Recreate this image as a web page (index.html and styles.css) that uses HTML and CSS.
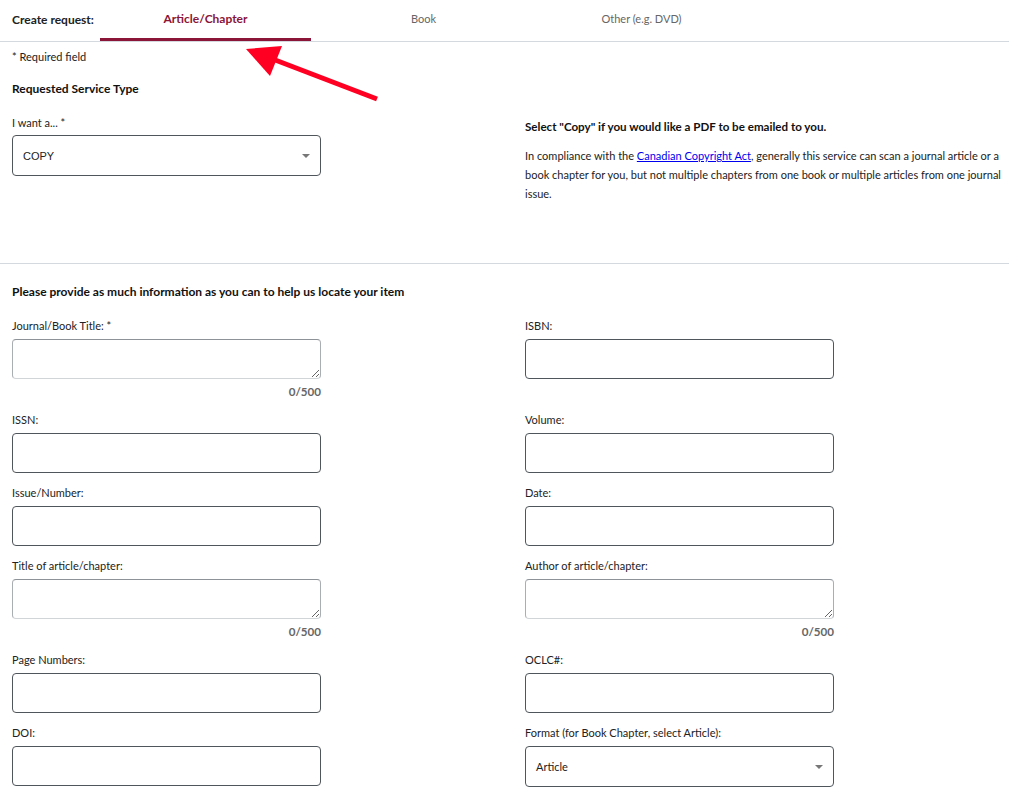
FILE: index.html
```html
<!DOCTYPE html>
<html lang="en">
<head>
<meta charset="utf-8">
<title>Create request</title>
<link rel="stylesheet" href="styles.css">
</head>
<body>
<header class="tabbar">
  <div class="tabbar-title">Create request:</div>
  <nav class="tabs">
    <div class="tab tab-active">Article/Chapter</div>
    <div class="tab">Book</div>
    <div class="tab">Other (e.g. DVD)</div>
  </nav>
</header>

<svg class="callout-arrow" width="150" height="70" viewBox="0 0 150 70" aria-hidden="true">
  <line x1="30" y1="18" x2="137" y2="59" stroke="#ff0022" stroke-width="5"/>
  <polygon points="6,9 42,6 30,36" fill="#ff0022"/>
</svg>

<main class="content">
  <section class="service">
    <p class="note">* Required field</p>
    <h2 class="heading">Requested Service Type</h2>
    <div class="service-grid">
      <div class="field">
        <label class="label">I want a... *</label>
        <div class="select select-copy">
          <span>COPY</span>
          <svg class="caret" width="8" height="4" viewBox="0 0 8 4"><polygon points="0,0 8,0 4,4" fill="#777"/></svg>
        </div>
      </div>
      <div class="info">
        <p class="info-title">Select "Copy" if you would like a PDF to be emailed to you.</p>
        <p class="info-text">In compliance with the <a href="#">Canadian Copyright Act</a>, generally this service can scan a journal article or a book chapter for you, but not multiple chapters from one book or multiple articles from one journal issue.</p>
      </div>
    </div>
  </section>

  <section class="details">
    <h2 class="heading">Please provide as much information as you can to help us locate your item</h2>
    <div class="fields">
      <div class="field">
        <label class="label">Journal/Book Title: *</label>
        <textarea class="textarea"></textarea>
        <div class="counter">0/500</div>
      </div>
      <div class="field">
        <label class="label">ISBN:</label>
        <input class="input" type="text">
      </div>
      <div class="field">
        <label class="label">ISSN:</label>
        <input class="input" type="text">
      </div>
      <div class="field">
        <label class="label">Volume:</label>
        <input class="input" type="text">
      </div>
      <div class="field">
        <label class="label">Issue/Number:</label>
        <input class="input" type="text">
      </div>
      <div class="field">
        <label class="label">Date:</label>
        <input class="input" type="text">
      </div>
      <div class="field">
        <label class="label">Title of article/chapter:</label>
        <textarea class="textarea"></textarea>
        <div class="counter">0/500</div>
      </div>
      <div class="field">
        <label class="label">Author of article/chapter:</label>
        <textarea class="textarea"></textarea>
        <div class="counter">0/500</div>
      </div>
      <div class="field">
        <label class="label">Page Numbers:</label>
        <input class="input" type="text">
      </div>
      <div class="field">
        <label class="label">OCLC#:</label>
        <input class="input" type="text">
      </div>
      <div class="field">
        <label class="label">DOI:</label>
        <input class="input" type="text">
      </div>
      <div class="field">
        <label class="label">Format (for Book Chapter, select Article):</label>
        <div class="select">
          <span>Article</span>
          <svg class="caret" width="8" height="4" viewBox="0 0 8 4"><polygon points="0,0 8,0 4,4" fill="#777"/></svg>
        </div>
      </div>
    </div>
  </section>
</main>
</body>
</html>
```

FILE: styles.css
```css
* { box-sizing: border-box; }

html, body {
  margin: 0;
  padding: 0;
  background: #fff;
}

body {
  font-family: Lato, "Open Sans", sans-serif;
  font-size: 11px;
  line-height: 16px;
  color: #222;
  position: relative;
}

.tabbar {
  display: flex;
  align-items: stretch;
  height: 42px;
  border-bottom: 1px solid #d3d9de;
  padding-left: 12px;
}

.tabbar-title {
  width: 88px;
  font-size: 12px;
  font-weight: 700;
  display: flex;
  align-items: center;
  padding-bottom: 1px;
  color: #222;
}

.tabs {
  display: flex;
  gap: 7px;
}

.tab {
  width: 211px;
  display: flex;
  align-items: center;
  justify-content: center;
  padding-bottom: 1px;
  color: #666;
  border-bottom: 3px solid transparent;
}

.tab-active {
  color: #8a1538;
  font-size: 12px;
  font-weight: 700;
  border-bottom-color: #8a1538;
}

.callout-arrow {
  position: absolute;
  left: 240px;
  top: 40px;
}

.content {
  padding: 0 4px 0 12px;
}

.note {
  margin: 7px 0 0;
}

.heading {
  font-size: 12px;
  line-height: 16px;
  font-weight: 700;
  margin: 0;
  color: #111;
}

.service .heading {
  margin-top: 16px;
}

.service {
  border-bottom: 1px solid #d3d9de;
  margin-left: -12px;
  margin-right: -4px;
  padding: 0 4px 60px 12px;
}

.service-grid {
  display: grid;
  grid-template-columns: 513px 1fr;
  margin-top: 18px;
}

.service-grid .field {
  width: 309px;
}

.service-grid .label {
  margin-bottom: 4px;
}

.info {
  padding-top: 4px;
}

.info-title {
  margin: 0;
  font-size: 11.6px;
  font-weight: 700;
  color: #111;
}

.info-text {
  margin: 11px 0 0;
  line-height: 19px;
  padding-right: 4px;
}

.info-text a {
  color: #0000ee;
}

.details .heading {
  margin-top: 20px;
}

.fields {
  display: grid;
  grid-template-columns: 309px 309px;
  column-gap: 204px;
  row-gap: 12px;
  margin-top: 18px;
  align-items: start;
}

.field {
  display: flex;
  flex-direction: column;
}

.label {
  display: block;
  margin-bottom: 5px;
  color: #222;
}

.input {
  height: 40px;
  width: 100%;
  border: 1px solid #4f565c;
  border-radius: 4px;
  font-family: inherit;
  background: #fff;
  margin: 0;
}

.textarea {
  height: 40px;
  width: 100%;
  border: 1px solid #a9aeb2;
  border-top-color: #8c9297;
  border-bottom-color: #d2d5d8;
  border-radius: 4px;
  font-family: inherit;
  margin: 0;
  resize: vertical;
  background: #fff;
}

.counter {
  margin-top: 5px;
  text-align: right;
  font-size: 11.6px;
  font-weight: 700;
  color: #666;
}

.select {
  height: 41px;
  width: 100%;
  border: 1px solid #4f565c;
  border-radius: 4px;
  display: flex;
  align-items: center;
  justify-content: space-between;
  padding: 0 10px 0 10px;
  color: #222;
}

.select-copy span {
  font-family: "Liberation Sans", Arial, sans-serif;
}

.caret {
  display: block;
}
```
